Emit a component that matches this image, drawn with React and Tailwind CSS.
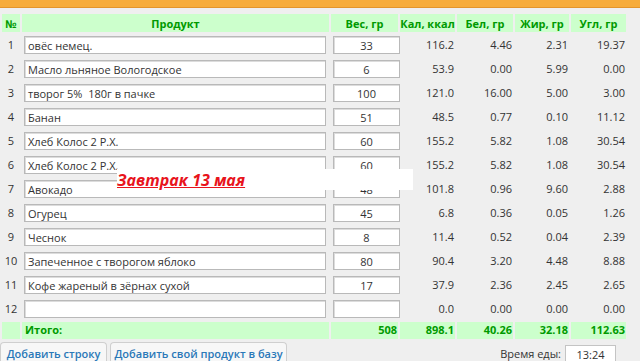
import React from "react";

const rows = [
  ["1", "овёс немец.", "33", "116.2", "4.46", "2.31", "19.37"],
  ["2", "Масло льняное Вологодское", "6", "53.9", "0.00", "5.99", "0.00"],
  ["3", "творог 5%  180г в пачке", "100", "121.0", "16.00", "5.00", "3.00"],
  ["4", "Банан", "51", "48.5", "0.77", "0.10", "11.12"],
  ["5", "Хлеб Колос 2 Р.Х.", "60", "155.2", "5.82", "1.08", "30.54"],
  ["6", "Хлеб Колос 2 Р.Х.", "60", "155.2", "5.82", "1.08", "30.54"],
  ["7", "Авокадо", "48", "101.8", "0.96", "9.60", "2.88"],
  ["8", "Огурец", "45", "6.8", "0.36", "0.05", "1.26"],
  ["9", "Чеснок", "8", "11.4", "0.52", "0.04", "2.39"],
  ["10", "Запеченное с творогом яблоко", "80", "90.4", "3.20", "4.48", "8.88"],
  ["11", "Кофе жареный в зёрнах сухой", "17", "37.9", "2.36", "2.45", "2.65"],
  ["12", "", "", "0.0", "0.00", "0.00", "0.00"],
];

const headers = ["№", "Продукт", "Вес, гр", "Кал, ккал", "Бел, гр", "Жир, гр", "Угл, гр"];

const font = { fontFamily: '"Open Sans", "DejaVu Sans", sans-serif' };

export default function App() {
  return (
    <div
      className="relative w-[640px] h-[361px] overflow-hidden bg-[#efefef] text-[#333] text-[11px]"
      style={font}
    >
      <div className="h-[8px] bg-[#f7ac3b] border-b border-[#e4952b]" />
      <div className="mt-[6px] ml-[2px] grid grid-cols-[18px_307px_67px_55px_56px_54px_55px] gap-x-[2px] gap-y-[2px]">
        {headers.map((h) => (
          <div
            key={h}
            className="h-[18px] bg-[#ccffcc] text-[#009a00] font-bold flex items-center justify-center leading-none"
          >
            {h}
          </div>
        ))}
        {rows.map((r) => (
          <React.Fragment key={r[0]}>
            <div className="h-[22px] flex items-center justify-center">{r[0]}</div>
            <div className="h-[22px] flex items-center pl-[2px]">
              <div className="w-[302px] h-[18px] bg-white border border-[#b9b9b9] shadow-[inset_1px_1px_0_#dcdcdc] flex items-center pl-[3px] leading-none whitespace-pre">
                {r[1]}
              </div>
            </div>
            <div className="h-[22px] flex items-center pl-[2px]">
              <div className="w-[67px] shrink-0 h-[18px] bg-white border border-[#b9b9b9] shadow-[inset_1px_1px_0_#dcdcdc] flex items-center justify-center leading-none">
                {r[2]}
              </div>
            </div>
            {r.slice(3).map((v, j) => (
              <div key={j} className="h-[22px] flex items-center justify-end pr-[1px]">
                {v}
              </div>
            ))}
          </React.Fragment>
        ))}
        <div className="h-[17px] bg-[#ccffcc]" />
        <div className="h-[17px] bg-[#ccffcc] text-[#009a00] font-bold flex items-center pl-[3px]">Итого:</div>
        {["508", "898.1", "40.26", "32.18", "112.63"].map((v) => (
          <div key={v} className="h-[17px] bg-[#ccffcc] text-[#009a00] font-bold flex items-center justify-end pr-[1px]">
            {v}
          </div>
        ))}
      </div>

      <div className="mt-[3px] h-[19px] flex items-start">
        <div className="w-[107px] h-[19px] bg-[#f7f7f7] border border-b-0 border-[#cfcfcf] rounded-t-[4px] text-[#2a78b8] font-semibold text-[11px] leading-none flex items-center justify-center pt-[2px] whitespace-nowrap">
          Добавить строку
        </div>
        <div className="ml-[3px] w-[177px] h-[19px] bg-[#f7f7f7] border border-b-0 border-[#cfcfcf] rounded-t-[4px] text-[#2a78b8] font-semibold text-[11px] leading-none flex items-center justify-center pt-[2px] whitespace-nowrap">
          Добавить свой продукт в базу
        </div>
        <div className="ml-auto mr-[24px] mt-[3px] h-[16px] flex items-center">
          <span className="text-[11px] text-[#333] mr-[4px] leading-none whitespace-nowrap">Время еды:</span>
          <div className="w-[51px] h-[16px] bg-white border border-b-0 border-[#c4c4c4] flex items-center justify-center text-[11px] leading-none pt-[2px]">
            13:24
          </div>
        </div>
      </div>

      <div className="absolute left-[117px] top-[169px] w-[296px] h-[21px] bg-white flex items-center">
        <span className="text-[#e8141c] font-bold italic text-[16px] underline leading-none">
          Завтрак 13 мая
        </span>
      </div>
    </div>
  );
}
